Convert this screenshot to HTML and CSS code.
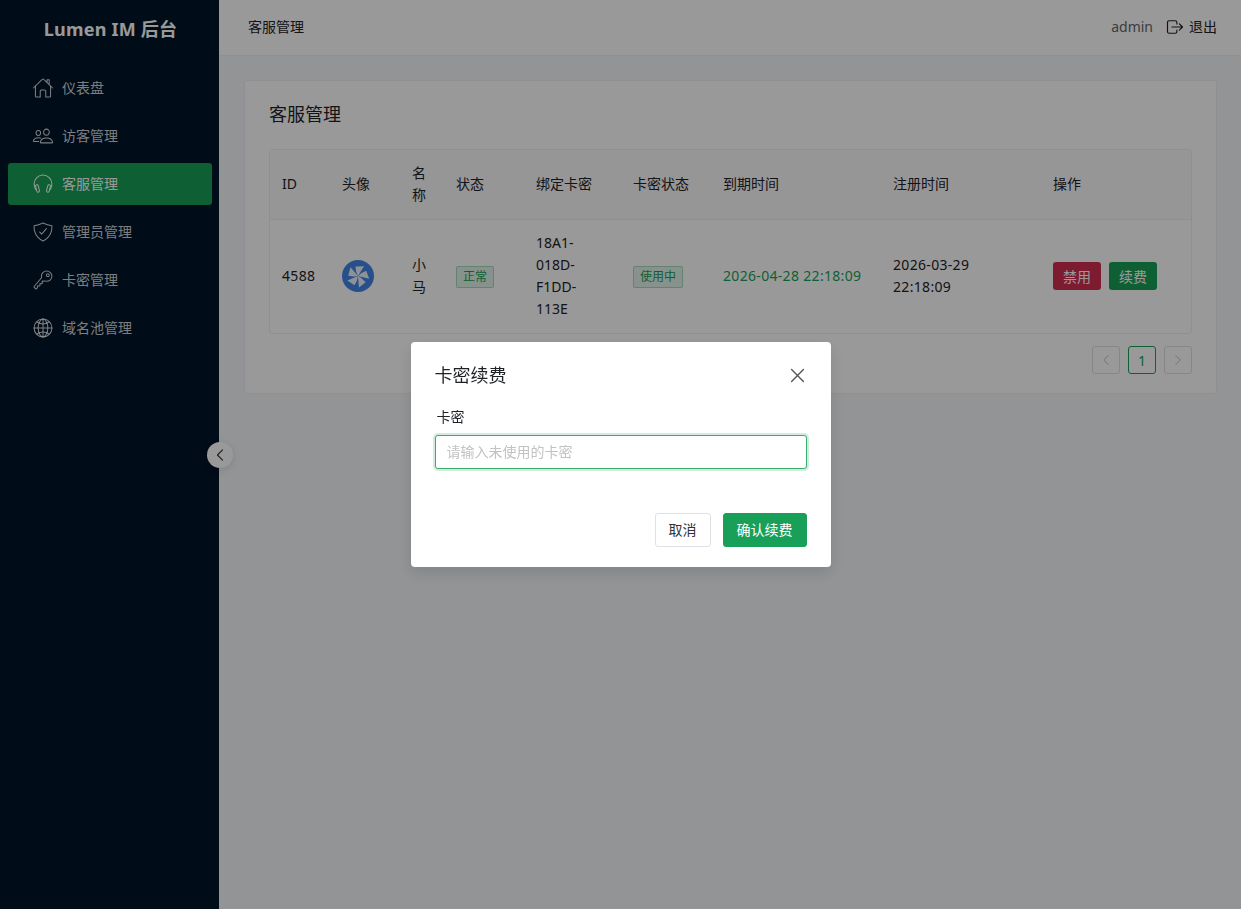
FILE: index.html
```html
<!DOCTYPE html>
<html lang="zh-CN">

<head>
  <meta charset="UTF-8">
  <meta name="viewport" content="width=device-width, initial-scale=1.0">
  <title>Lumen IM 后台</title>
  <link rel="stylesheet" href="styles.css">
</head>

<body>
  <div class="layout">
    <aside class="sider">
      <div class="logo">Lumen IM 后台</div>
      <nav class="menu">
        <a class="menu-item">
          <svg class="icon menu-icon" viewBox="0 0 512 512"><path d="M80 212v236a16 16 0 0016 16h96V328a24 24 0 0124-24h80a24 24 0 0124 24v136h96a16 16 0 0016-16V212"/><path d="M480 256L266.89 52c-5-5.27-16.69-5.33-21.78 0L32 256M400 179V64h-48v69"/></svg>
          <span>仪表盘</span>
        </a>
        <a class="menu-item">
          <svg class="icon menu-icon" viewBox="0 0 512 512"><path d="M402 168c-2.93 40.67-33.1 72-66 72s-63.12-31.32-66-72c-3-42.31 26.37-72 66-72s69 30.46 66 72z"/><path d="M336 304c-65.17 0-127.84 32.37-143.54 95.41-2.08 8.34 3.15 16.59 11.72 16.59h263.65c8.57 0 13.77-8.25 11.72-16.59C463.85 335.36 401.18 304 336 304z"/><path d="M200 185.94c-2.34 32.48-26.72 58.06-53 58.06s-50.7-25.57-53-58.06C91.61 152.15 115.34 128 147 128s55.39 24.77 53 57.94z"/><path d="M206 306c-18.05-8.27-37.93-11.45-59-11.45-52 0-102.1 25.85-114.65 76.2-1.65 6.66 2.53 13.25 9.37 13.25H154"/></svg>
          <span>访客管理</span>
        </a>
        <a class="menu-item active">
          <svg class="icon menu-icon" viewBox="0 0 512 512"><path d="M83 384c-13-33-35-93.37-35-128C48 141.12 149.33 48 256 48s208 93.12 208 208c0 34.63-23 97-35 128"/><rect x="96" y="272" width="64" height="176" rx="32" transform="rotate(-14 128 360)"/><rect x="352" y="272" width="64" height="176" rx="32" transform="rotate(14 384 360)"/></svg>
          <span>客服管理</span>
        </a>
        <a class="menu-item">
          <svg class="icon menu-icon" viewBox="0 0 512 512"><path d="M336 176L225.2 304 176 255.8"/><path d="M463.1 112.37C373.68 96.33 336.71 84.45 256 48c-80.71 36.45-117.68 48.33-207.1 64.37C32.7 369.13 240.58 457.79 256 464c15.42-6.21 223.3-94.87 207.1-351.63z"/></svg>
          <span>管理员管理</span>
        </a>
        <a class="menu-item">
          <svg class="icon menu-icon" viewBox="0 0 512 512"><path d="M218.1 167.17c0 13 0 25.6 4.1 37.4-43.1 50.6-156.9 184.4-167.5 194.5a20.9 20.9 0 00-6.7 15c0 8.5 5.2 16.7 9.6 21.3 6.6 6.9 34.8 33 40 28 15.4-15 18.5-19 24.8-25.2 9.5-9.3-1-28.3 2.3-36s6.8-9.2 12.5-10.4 15.8 2.9 23.7 3c8.3.1 12.8-3.4 19-9.2 5-4.6 8.6-8.9 8.7-15.6.2-9-12.8-20.9-3.1-30.4s23.7 6.2 34 5 22.8-15.5 24.1-21.6-11.7-21.8-9.7-30.7c.7-3 6.8-10 11.4-11s25 6.9 29.6 5.9c5.6-1.2 12.1-7.1 17.4-10.4 15.5 6.7 29.6 9.4 47.7 9.4 68.5 0 124-53.4 124-119.2S408.5 48 340 48s-121.9 53.37-121.9 119.17zM400 144a32 32 0 11-32-32 32 32 0 0132 32z"/></svg>
          <span>卡密管理</span>
        </a>
        <a class="menu-item">
          <svg class="icon menu-icon" viewBox="0 0 512 512"><path d="M256 48C141.13 48 48 141.13 48 256s93.13 208 208 208 208-93.13 208-208S370.87 48 256 48z"/><path d="M256 48c-58.07 0-112.67 93.13-112.67 208S197.93 464 256 464s112.67-93.13 112.67-208S314.07 48 256 48z"/><path d="M117.33 117.33c38.24 27.15 86.38 43.34 138.67 43.34s100.43-16.19 138.67-43.34M394.67 394.67c-38.24-27.15-86.38-43.34-138.67-43.34s-100.43 16.19-138.67 43.34"/><path d="M256 48v416M464 256H48"/></svg>
          <span>域名池管理</span>
        </a>
      </nav>
      <button class="collapse-btn">
        <svg class="icon" viewBox="0 0 512 512"><path d="M328 112L184 256l144 144"/></svg>
      </button>
    </aside>

    <div class="main">
      <header class="topbar">
        <div class="crumb">客服管理</div>
        <div class="user">
          <span class="user-name">admin</span>
          <a class="logout">
            <svg class="icon" viewBox="0 0 512 512"><path d="M304 336v40a40 40 0 01-40 40H104a40 40 0 01-40-40V136a40 40 0 0140-40h152c22.09 0 48 17.91 48 40v40M368 336l80-80-80-80M176 256h256"/></svg>
            <span>退出</span>
          </a>
        </div>
      </header>

      <main class="content">
        <section class="card">
          <h2 class="card-title">客服管理</h2>
          <div class="table-wrap">
            <table class="table">
              <colgroup>
                <col class="col-id">
                <col class="col-avatar">
                <col class="col-name">
                <col class="col-status">
                <col class="col-code">
                <col class="col-code-status">
                <col class="col-expire">
                <col class="col-created">
                <col class="col-actions">
              </colgroup>
              <thead>
                <tr>
                  <th>ID</th>
                  <th>头像</th>
                  <th>名称</th>
                  <th>状态</th>
                  <th>绑定卡密</th>
                  <th>卡密状态</th>
                  <th>到期时间</th>
                  <th>注册时间</th>
                  <th>操作</th>
                </tr>
              </thead>
              <tbody>
                <tr>
                  <td class="num">4588</td>
                  <td>
                    <svg class="avatar" viewBox="0 0 32 32">
                      <circle cx="16" cy="16" r="16" class="avatar-bg"/>
                      <g class="avatar-blade">
                        <path d="M16 16L22 6.2 13.5 6.5Q13.6 12 16 16z"/>
                        <path d="M16 16L22 6.2 13.5 6.5Q13.6 12 16 16z" transform="rotate(72 16 16)"/>
                        <path d="M16 16L22 6.2 13.5 6.5Q13.6 12 16 16z" transform="rotate(144 16 16)"/>
                        <path d="M16 16L22 6.2 13.5 6.5Q13.6 12 16 16z" transform="rotate(216 16 16)"/>
                        <path d="M16 16L22 6.2 13.5 6.5Q13.6 12 16 16z" transform="rotate(288 16 16)"/>
                      </g>
                    </svg>
                  </td>
                  <td>小马</td>
                  <td><span class="tag">正常</span></td>
                  <td class="code">18A1-018D-F1DD-113E</td>
                  <td><span class="tag">使用中</span></td>
                  <td class="num green">2026-04-28 22:18:09</td>
                  <td class="num">2026-03-29 22:18:09</td>
                  <td>
                    <div class="actions">
                      <button class="btn-small danger">禁用</button>
                      <button class="btn-small success">续费</button>
                    </div>
                  </td>
                </tr>
              </tbody>
            </table>
          </div>
          <div class="pager">
            <button class="page-btn disabled">
              <svg class="icon" viewBox="0 0 512 512"><path d="M328 112L184 256l144 144"/></svg>
            </button>
            <button class="page-btn current">1</button>
            <button class="page-btn disabled">
              <svg class="icon" viewBox="0 0 512 512"><path d="M184 112l144 144-144 144"/></svg>
            </button>
          </div>
        </section>
      </main>
    </div>
  </div>

  <div class="overlay">
    <div class="modal">
      <div class="modal-head">
        <h3>卡密续费</h3>
        <button class="modal-close">
          <svg class="icon" viewBox="0 0 512 512"><path d="M368 368L144 144M368 144L144 368"/></svg>
        </button>
      </div>
      <label class="field-label" for="cardCode">卡密</label>
      <input id="cardCode" class="field-input" type="text" placeholder="请输入未使用的卡密">
      <div class="modal-foot">
        <button class="btn">取消</button>
        <button class="btn primary">确认续费</button>
      </div>
    </div>
  </div>
</body>

</html>
```

FILE: styles.css
```css
* {
  box-sizing: border-box;
}

body {
  margin: 0;
  height: 909px;
  overflow: hidden;
  font-family: "Noto Sans", "Noto Sans CJK SC", sans-serif;
  font-size: 14px;
  line-height: 22px;
  color: #1f2225;
  background-color: #f5f7f9;
}

button {
  font-family: inherit;
  cursor: pointer;
}

.icon {
  display: block;
  fill: none;
  stroke: currentColor;
  stroke-width: 32;
  stroke-linecap: round;
  stroke-linejoin: round;
}

.layout {
  display: flex;
  height: 100%;
}

/* 左侧菜单 */
.sider {
  position: relative;
  width: 219px;
  flex-shrink: 0;
  background-color: #001428;
}

.logo {
  height: 58px;
  padding-left: 2px;
  line-height: 58px;
  text-align: center;
  font-size: 18px;
  font-weight: 700;
  letter-spacing: 0.2px;
  color: #fff;
}

.menu {
  display: flex;
  flex-direction: column;
  gap: 6px;
  padding: 9px 7px 0 8px;
}

.menu-item {
  display: flex;
  align-items: center;
  height: 42px;
  padding-left: 24px;
  border-radius: 3px;
  color: rgba(255, 255, 255, 0.82);
}

.menu-item.active {
  background-color: #18a058;
  color: #fff;
}

.menu-icon {
  width: 22px;
  height: 22px;
  margin-right: 8px;
  stroke-width: 24;
}

.collapse-btn {
  position: absolute;
  top: 442px;
  right: -14px;
  display: flex;
  align-items: center;
  justify-content: center;
  width: 26px;
  height: 26px;
  padding: 0;
  border: none;
  border-radius: 50%;
  background-color: #fff;
  color: #333;
  box-shadow: 0 2px 8px rgba(0, 0, 0, 0.12);
}

.collapse-btn .icon {
  width: 18px;
  height: 18px;
}

/* 右侧内容 */
.main {
  flex: 1;
  min-width: 0;
}

.topbar {
  display: flex;
  align-items: center;
  justify-content: space-between;
  height: 56px;
  padding: 0 24px 2px 29px;
  background-color: #fff;
  border-bottom: 1px solid #efeff5;
}

.user {
  display: flex;
  align-items: center;
  gap: 12px;
}

.user-name {
  color: #666;
}

.logout {
  display: flex;
  align-items: center;
  gap: 4px;
}

.logout .icon {
  width: 20px;
  height: 20px;
  stroke-width: 30;
}

.content {
  padding: 24px 24px 0 25px;
}

.card {
  padding: 20px 24px 19px;
  background-color: #fff;
  border: 1px solid #efeff5;
  border-radius: 3px;
}

.card-title {
  margin: 0 0 22px;
  font-size: 18px;
  font-weight: 400;
  line-height: 26px;
}

.table-wrap {
  border: 1px solid #efeff5;
  border-radius: 3px;
}

.table {
  width: 100%;
  border-collapse: collapse;
  table-layout: fixed;
}

.col-id { width: 60px; }
.col-avatar { width: 70px; }
.col-name { width: 44px; }
.col-status { width: 80px; }
.col-code { width: 97px; }
.col-code-status { width: 90px; }
.col-expire { width: 170px; }
.col-created { width: 160px; }

.table th,
.table td {
  padding: 12px 12px 13px;
  text-align: left;
  vertical-align: middle;
  font-weight: 400;
}

.table th {
  background-color: #fafafc;
  border-bottom: 1px solid #efeff5;
}

.table .code {
  padding-right: 20px;
}

.num {
  letter-spacing: 0.32px;
}

.avatar {
  display: block;
  width: 32px;
  height: 32px;
}

.avatar-bg {
  fill: #4285e8;
}

.avatar-blade {
  fill: #fff;
  opacity: 0.9;
}

.tag {
  display: inline-block;
  height: 22px;
  padding: 0 6px;
  font-size: 12px;
  line-height: 20px;
  color: #18a058;
  background-color: rgba(24, 160, 88, 0.12);
  border: 1px solid rgba(24, 160, 88, 0.3);
  border-radius: 2px;
}

.green {
  color: #18a058;
}

.actions {
  display: flex;
  gap: 8px;
}

.btn-small {
  width: 48px;
  height: 28px;
  padding: 0;
  border: none;
  border-radius: 3px;
  font-size: 14px;
  color: #fff;
}

.btn-small.danger {
  background-color: #d03050;
}

.btn-small.success {
  background-color: #18a058;
}

.pager {
  display: flex;
  justify-content: flex-end;
  gap: 8px;
  margin-top: 12px;
}

.page-btn {
  display: flex;
  align-items: center;
  justify-content: center;
  width: 28px;
  height: 28px;
  padding: 0;
  font-size: 14px;
  background: none;
  border: 1px solid #e0e0e6;
  border-radius: 3px;
  color: #1f2225;
}

.page-btn .icon {
  width: 16px;
  height: 16px;
}

.page-btn.disabled {
  color: #c2c2c2;
}

.page-btn.current {
  color: #18a058;
  border-color: #18a058;
}

/* 续费弹窗 */
.overlay {
  position: fixed;
  inset: 0;
  display: flex;
  align-items: center;
  justify-content: center;
  background-color: rgba(0, 0, 0, 0.4);
}

.modal {
  width: 420px;
  height: 225px;
  padding: 20px 24px;
  background-color: #fff;
  border-radius: 4px;
  box-shadow: 0 6px 16px rgba(0, 0, 0, 0.12);
}

.modal-head {
  display: flex;
  align-items: center;
  justify-content: space-between;
  height: 26px;
  margin-bottom: 18px;
}

.modal-head h3 {
  margin: 0;
  font-size: 18px;
  font-weight: 400;
}

.modal-close {
  width: 27px;
  height: 27px;
  margin-right: -4px;
  padding: 0;
  background: none;
  border: none;
  color: #555;
}

.modal-close .icon {
  stroke-width: 26;
}

.field-label {
  display: block;
  padding-left: 2px;
  margin-bottom: 7px;
}

.field-input {
  display: block;
  width: 100%;
  height: 34px;
  padding: 0 11px 2px;
  font-family: inherit;
  font-size: 14px;
  border: 1px solid #36ad6a;
  border-radius: 3px;
  box-shadow: 0 0 0 2px rgba(24, 160, 88, 0.2);
  outline: none;
}

.field-input::placeholder {
  color: #c2c2c2;
}

.modal-foot {
  display: flex;
  justify-content: flex-end;
  gap: 12px;
  margin-top: 44px;
}

.btn {
  height: 34px;
  padding: 0 13px 2px;
  font-size: 14px;
  color: #333;
  background-color: #fff;
  border: 1px solid #e0e0e6;
  border-radius: 3px;
}

.btn.primary {
  color: #fff;
  background-color: #18a058;
  border-color: #18a058;
}
```
